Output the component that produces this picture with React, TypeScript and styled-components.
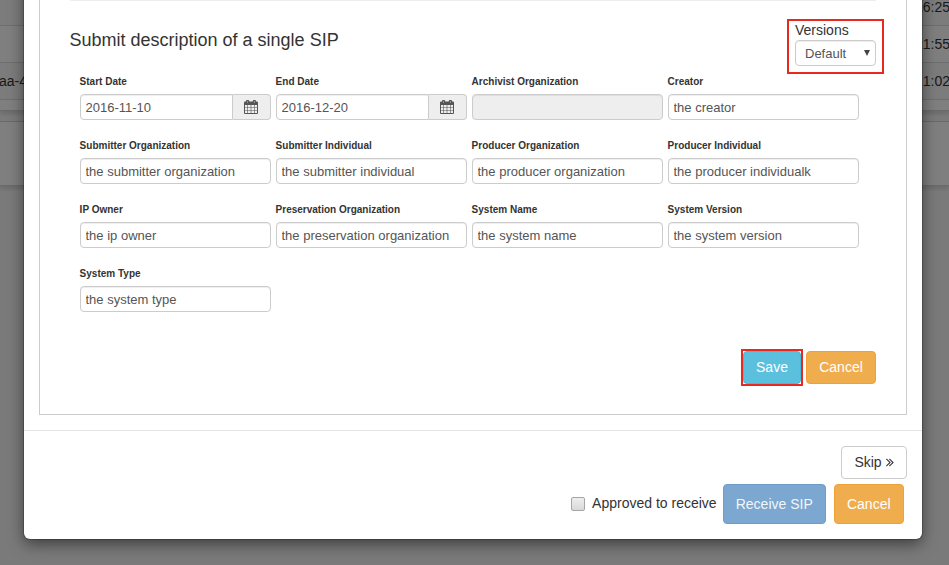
import React from 'react';
import styled, { createGlobalStyle } from 'styled-components';

const GlobalStyle = createGlobalStyle`
  *, *::before, *::after { box-sizing: border-box; }
  html, body { margin: 0; overflow: hidden; }
  body {
    font-family: "Liberation Sans", Arial, sans-serif;
    font-size: 14px;
    line-height: 20px;
    color: #333;
    background: #f5f5f5;
  }
  input, button, select { font-family: inherit; margin: 0; }
`;

const Page = styled.div`
  position: relative;
  height: 565px;
  overflow: hidden;
`;

const TablePanel = styled.div`
  height: 111px;
  background: #fff;
  border-bottom: 1px solid #d4d4d4;
  box-shadow: 0 3px 4px rgba(0, 0, 0, 0.12);
`;

const TableRow = styled.div<{ $first?: boolean; $striped?: boolean }>`
  display: flex;
  justify-content: space-between;
  align-items: center;
  height: ${(p) => (p.$first ? 26 : 37)}px;
  margin-right: -1px;
  padding-bottom: ${(p) => (p.$first ? 11 : 0)}px;
  border-bottom: 1px solid #ddd;
  background: ${(p) => (p.$striped ? '#f9f9f9' : '#fff')};
`;

const CellText = styled.span`
  margin-left: -1px;
`;

const BlankPanel = styled.div`
  height: 65px;
  margin-top: 10px;
  background: #fff;
  border-top: 1px solid #d4d4d4;
  border-bottom: 1px solid #d4d4d4;
  box-shadow: 0 3px 4px rgba(0, 0, 0, 0.12);
`;

const Backdrop = styled.div`
  position: absolute;
  inset: 0;
  background: rgba(0, 0, 0, 0.5);
`;

const Modal = styled.div`
  position: absolute;
  top: -40px;
  left: 24px;
  width: 898px;
  height: 579px;
  padding-top: 40px;
  background: #fff;
  border-radius: 6px;
  box-shadow: 0 0 0 1px rgba(0, 0, 0, 0.2), 0 5px 15px rgba(0, 0, 0, 0.5);
`;

const Panel = styled.div`
  height: 415px;
  margin: 0 15px;
  padding: 0 30px;
  border: 1px solid #ccc;
  border-top: 0;
`;

const Divider = styled.div`
  height: 1px;
  background: #eee;
`;

const Header = styled.div`
  display: flex;
  justify-content: space-between;
  align-items: flex-start;
  margin: 18px -8px 0 0;
`;

const Title = styled.h4`
  margin: 11px 0 0 -0.5px;
  font-size: 18px;
  font-weight: 400;
  line-height: 20px;
`;

const Marked = styled.div`
  border: 2px solid #e8291f;
`;

const Versions = styled(Marked)`
  display: flex;
  flex-direction: column;
  width: 97px;
  height: 55px;
  padding: 0 6px;
  line-height: 19px;
`;

const SelectBox = styled.button`
  display: flex;
  align-items: center;
  justify-content: space-between;
  height: 26px;
  padding: 0 5px 0 9px;
  border: 1px solid #ccc;
  border-radius: 4px;
  background: #fff;
  color: #555;
  font-size: 13px;
  box-shadow: inset 0 1px 1px rgba(0, 0, 0, 0.075);
`;

const Arrow = styled.svg`
  width: 6px;
  height: 6px;
  margin-bottom: 1px;
  fill: #444;
`;

const Fields = styled.div`
  display: grid;
  grid-template-columns: repeat(4, 191px);
  gap: 18px 5px;
  padding-left: 10px;
`;

const Field = styled.label`
  display: flex;
  flex-direction: column;
  gap: 4px;
`;

const FieldLabel = styled.span`
  margin-left: -0.4px;
  font-size: 10px;
  font-weight: 700;
  line-height: 16px;
`;

const InputGroup = styled.span`
  display: flex;
`;

const Input = styled.input<{ $joined?: boolean }>`
  flex: 1;
  min-width: 0;
  height: 26px;
  padding: 1px 4.5px 0;
  border: 1px solid #ccc;
  border-radius: ${(p) => (p.$joined ? '4px 0 0 4px' : '4px')};
  background: #fff;
  color: #555;
  font-size: 13px;
  box-shadow: inset 0 1px 1px rgba(0, 0, 0, 0.075);
  outline: 0;

  &:disabled { background: #eee; }
`;

const Addon = styled.span`
  display: flex;
  align-items: center;
  justify-content: center;
  width: 38px;
  padding-right: 1px;
  border: 1px solid #ccc;
  border-left: 0;
  border-radius: 0 4px 4px 0;
  background: #eee;
  color: #555;
`;

const Glyph = styled.svg`
  flex: none;
  fill: currentColor;
`;

const Actions = styled.div`
  display: flex;
  align-items: center;
  justify-content: flex-end;
  gap: 3px;
  margin-top: 37px;
`;

const tones = {
  info: { bg: '#5bc0de', border: '#46b8da', text: '#fff' },
  warning: { bg: '#f0ad4e', border: '#eea236', text: '#fff' },
  primary: { bg: '#7ba7d0', border: '#6f9dc8', text: '#f1f6fa' },
  plain: { bg: '#fff', border: '#ccc', text: '#333' },
};

const Button = styled.button<{ $tone: keyof typeof tones; $width: number; $tall?: boolean }>`
  display: flex;
  align-items: center;
  justify-content: center;
  width: ${(p) => p.$width}px;
  height: ${(p) => (p.$tall ? 40 : 33)}px;
  padding: 0 ${(p) => (p.$tall ? '0.5px 0' : '0 1px')} 0;
  border: 1px solid ${(p) => tones[p.$tone].border};
  border-radius: 4px;
  background: ${(p) => tones[p.$tone].bg};
  color: ${(p) => tones[p.$tone].text};
  font-size: 14px;
  line-height: 20px;
  white-space: nowrap;
`;

const Footer = styled.div`
  display: flex;
  flex-direction: column;
  align-items: flex-end;
  gap: 5px;
  margin-top: 15px;
  padding: 15px 15px 0;
  border-top: 1px solid #e5e5e5;
`;

const ApproveRow = styled.div`
  display: flex;
  align-items: center;
  margin-right: 3px;
`;

const Approve = styled.label`
  display: flex;
  align-items: center;
  gap: 7px;
  margin-right: 6.4px;
`;

const Checkbox = styled.input`
  appearance: none;
  width: 14px;
  height: 14px;
  border: 1px solid #a6a6a6;
  border-radius: 2px;
  background: linear-gradient(#eee, #d9d9d9);
`;

const ButtonPair = styled.div`
  display: flex;
  gap: 8px;
`;

const ApproveText = styled.span`
  padding-bottom: 2px;
`;

const CalendarIcon = () => (
  <Glyph width="14" height="14" viewBox="0 0 14 14">
    <path
      fillRule="evenodd"
      d="M1 1.500h1V1a1 1 0 0 1 1-1h1.200a1 1 0 0 1 1 1v.5h3.600V1a1 1 0 0 1 1-1h1.200a1 1 0 0 1 1 1v.5h1a1 1 0 0 1 1 1V13a1 1 0 0 1-1 1H1a1 1 0 0 1-1-1V2.500a1 1 0 0 1 1-1zM1 5v2.400h2.400V5zM4 5v2.400h2.700V5zM7.300 5v2.400h2.700V5zM10.600 5v2.400H13V5zM1 8v2.400h2.400V8zM4 8v2.400h2.700V8zM7.300 8v2.400h2.700V8zM10.600 8v2.400H13V8zM1 11v2h2.400v-2zM4 11v2h2.700v-2zM7.300 11v2h2.700v-2zM10.600 11v2H13v-2zM3.400 1v2h.4V1zM10.200 1v2h.4V1z"
    />
  </Glyph>
);

const DoubleAngleIcon = () => (
  <Glyph width="8" height="14" viewBox="384 0 1024 1792">
    <path d="M979 960q0 13-10 23l-466 466q-10 10-23 10t-23-10l-50-50q-10-10-10-23t10-23l393-393-393-393q-10-10-10-23t10-23l50-50q10-10 23-10t23 10l466 466q10 10 10 23zm384 0q0 13-10 23l-466 466q-10 10-23 10t-23-10l-50-50q-10-10-10-23t10-23l393-393-393-393q-10-10-10-23t10-23l50-50q10-10 23-10t23 10l466 466q10 10 10 23z" />
  </Glyph>
);

const SkipLabel = styled.span`
  display: flex;
  align-items: center;
  gap: 4px;
`;

type FieldData = { label: string; value: string; kind?: 'date' | 'disabled' };

const fields: FieldData[] = [
  { label: 'Start Date', value: '2016-11-10', kind: 'date' },
  { label: 'End Date', value: '2016-12-20', kind: 'date' },
  { label: 'Archivist Organization', value: '', kind: 'disabled' },
  { label: 'Creator', value: 'the creator' },
  { label: 'Submitter Organization', value: 'the submitter organization' },
  { label: 'Submitter Individual', value: 'the submitter individual' },
  { label: 'Producer Organization', value: 'the producer organization' },
  { label: 'Producer Individual', value: 'the producer individualk' },
  { label: 'IP Owner', value: 'the ip owner' },
  { label: 'Preservation Organization', value: 'the preservation organization' },
  { label: 'System Name', value: 'the system name' },
  { label: 'System Version', value: 'the system version' },
  { label: 'System Type', value: 'the system type' },
];

export default function App() {
  return (
    <>
      <GlobalStyle />
      <Page>
        <TablePanel>
          <TableRow $first $striped><span /><span>16:25</span></TableRow>
          <TableRow><span /><span>21:55</span></TableRow>
          <TableRow $striped><CellText>aa-4</CellText><span>21:02</span></TableRow>
        </TablePanel>
        <BlankPanel />
        <Backdrop />
        <Modal>
          <Panel>
            <Divider />
            <Header>
              <Title>Submit description of a single SIP</Title>
              <Versions>
                Versions
                <SelectBox>
                  Default
                  <Arrow viewBox="0 0 6 6"><path d="M0 0h6L3 6z" /></Arrow>
                </SelectBox>
              </Versions>
            </Header>
            <Fields>
              {fields.map((f) => (
                <Field key={f.label}>
                  <FieldLabel>{f.label}</FieldLabel>
                  <InputGroup>
                    <Input
                      defaultValue={f.value}
                      disabled={f.kind === 'disabled'}
                      $joined={f.kind === 'date'}
                    />
                    {f.kind === 'date' && <Addon><CalendarIcon /></Addon>}
                  </InputGroup>
                </Field>
              ))}
            </Fields>
            <Actions>
              <Marked><Button $tone="info" $width={58}>Save</Button></Marked>
              <Button $tone="warning" $width={70}>Cancel</Button>
            </Actions>
          </Panel>
          <Footer>
            <Button $tone="plain" $width={66}>
              <SkipLabel>Skip <DoubleAngleIcon /></SkipLabel>
            </Button>
            <ApproveRow>
              <Approve>
                <Checkbox type="checkbox" />
                <ApproveText>Approved to receive</ApproveText>
              </Approve>
              <ButtonPair>
                <Button $tone="primary" $width={103} $tall>Receive SIP</Button>
                <Button $tone="warning" $width={70} $tall>Cancel</Button>
              </ButtonPair>
            </ApproveRow>
          </Footer>
        </Modal>
      </Page>
    </>
  );
}
